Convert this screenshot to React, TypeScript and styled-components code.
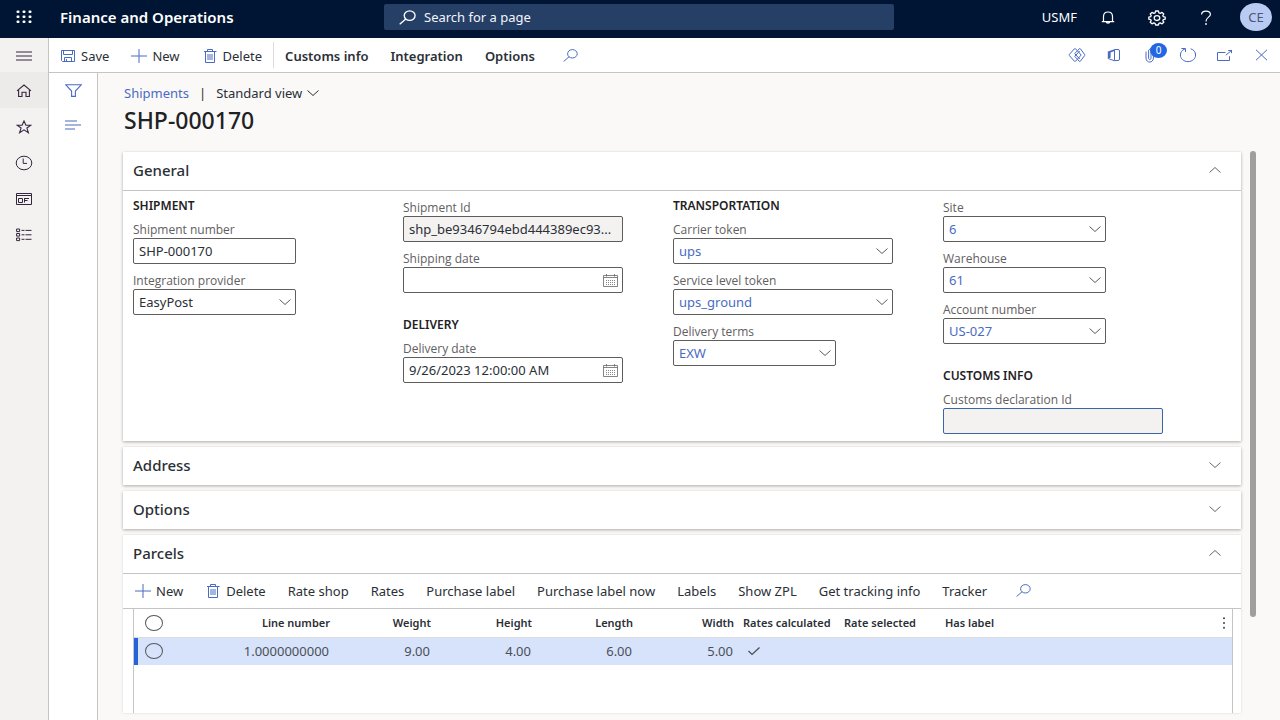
import React from "react";
import styled, { createGlobalStyle, css } from "styled-components";

const blue = "#4a6bc4";
const ink = "#2b2f36";
const line = "#c4c4c4";

const GlobalStyle = createGlobalStyle`
  * { box-sizing: border-box; }
  body {
    margin: 0;
    background: #faf9f8;
    color: ${ink};
    font-family: "Noto Sans", "Open Sans", sans-serif;
    font-size: 13px;
    line-height: 18px;
  }
  button, input, select { font: inherit; color: inherit; margin: 0; }
  svg { display: block; flex: none; }
`;

const Shell = styled.div`
  min-height: 100vh;
  display: flex;
  flex-direction: column;
`;

const PlainButton = styled.button`
  display: flex;
  align-items: center;
  justify-content: center;
  padding: 0;
  border: 0;
  background: none;
  cursor: pointer;
`;

/* ---------- top bar ---------- */

const TopBar = styled.header`
  display: grid;
  grid-template-columns: 30% 40% 30%;
  align-items: center;
  height: 38px;
  padding-bottom: 4px;
  background: #001433;
  color: #fff;
`;

const Brand = styled.div`
  display: flex;
  align-items: center;
  font-size: 15px;
  font-weight: 600;
`;

const Waffle = styled(PlainButton)`
  width: 48px;
  height: 34px;
  margin-right: 12px;
`;

const SearchBox = styled.label`
  display: flex;
  align-items: center;
  gap: 8px;
  height: 26px;
  margin-right: 2px;
  padding: 0 15px;
  border-radius: 2px;
  background: #263f66;
`;

const SearchInput = styled.input`
  flex: 1;
  min-width: 0;
  padding: 0;
  border: 0;
  outline: 0;
  background: none;
  color: #fff;
  &::placeholder { color: #f3f5f9; opacity: 1; }
`;

const TopTools = styled.div`
  display: flex;
  align-items: center;
  justify-content: flex-end;
  padding-right: 8px;
`;

const Company = styled(PlainButton)`
  color: #fff;
  margin-right: 6px;
`;

const TopTool = styled(PlainButton)`
  width: 49px;
  height: 34px;
  padding-top: 2px;
  color: #fff;
`;

const Avatar = styled(PlainButton)`
  width: 32px;
  height: 28px;
  margin-left: 10px;
  border-radius: 50%;
  background: #b9cbf3;
  color: #4a5878;
`;

/* ---------- frame ---------- */

const Frame = styled.div`
  flex: 1;
  display: flex;
`;

const Rail = styled.nav`
  width: 49px;
  flex: none;
  border-right: 1px solid ${line};
  background: #f3f2f1;
`;

const RailButton = styled(PlainButton)<{ $on?: boolean }>`
  width: 48px;
  height: 36px;
  padding-top: 2px;
  color: #33263f;
  background: ${(p) => (p.$on ? "#edebe9" : "none")};
  &:first-child { height: 34px; }
`;

const Workspace = styled.div`
  flex: 1;
  min-width: 0;
  display: flex;
  flex-direction: column;
`;

const ActionBar = styled.div`
  display: flex;
  justify-content: space-between;
  height: 35px;
  border-bottom: 1px solid ${line};
  background: #fff;
`;

const BarGroup = styled.div`
  display: flex;
  align-items: center;
`;

const BarButton = styled(PlainButton)<{ $tab?: boolean }>`
  gap: 5px;
  height: 34px;
  padding: 1px 11px 0;
  white-space: nowrap;
  font-weight: ${(p) => (p.$tab ? 600 : 400)};
  svg { color: ${blue}; }
`;

const BarSearch = styled(PlainButton)`
  width: 50px;
  height: 30px;
  color: ${blue};
`;

const Divider = styled.span`
  width: 1px;
  height: 26px;
  background: #dcdcdc;
`;

const BarIcons = styled(BarGroup)`
  color: ${blue};
`;

const BarIcon = styled(PlainButton)`
  position: relative;
  width: 37px;
  height: 34px;
  color: ${blue};
`;

const CountBadge = styled.span`
  position: absolute;
  top: 5px;
  left: 18px;
  width: 17px;
  height: 15px;
  border-radius: 50%;
  background: #2266e3;
  color: #fff;
  font-size: 10px;
  line-height: 15px;
  text-align: center;
`;

const Columns = styled.div`
  flex: 1;
  display: flex;
`;

const FilterRail = styled.aside`
  width: 49px;
  flex: none;
  border-right: 1px solid ${line};
  background: #fff;
`;

const FilterButton = styled(PlainButton)`
  width: 48px;
  height: 34px;
  padding-top: 1px;
  color: ${blue};
`;

const Main = styled.main`
  flex: 1;
  min-width: 0;
  display: flex;
  flex-direction: column;
  padding: 11px 24px 7px 25px;
`;

const Crumbs = styled.div`
  display: flex;
  align-items: center;
  padding-left: 1px;
`;

const CrumbLink = styled.a`
  color: ${blue};
  text-decoration: none;
`;

const Bar = styled.span`
  margin: 0 10px;
`;

const ViewButton = styled(PlainButton)`
  gap: 5px;
`;

const Title = styled.h1`
  margin: 5px 0 18px 1px;
  font-size: 23px;
  line-height: 26px;
  font-weight: 500;
  color: #1f2225;
`;

const Scroller = styled.div`
  flex: 1;
  display: flex;
  gap: 9px;
`;

const Cards = styled.div`
  flex: 1;
  min-width: 0;
  display: flex;
  flex-direction: column;
  gap: 6px;
  padding-top: 1px;
`;

const Thumb = styled.div`
  width: 6px;
  height: 83%;
  border-radius: 3px;
  background: #a09f9e;
`;

/* ---------- cards ---------- */

const Card = styled.section<{ $grow?: boolean }>`
  display: flex;
  flex-direction: column;
  background: #fff;
  box-shadow: ${(p) => (p.$grow ? "0 0 2px rgba(0,0,0,.16)" : "0 1px 3px rgba(0,0,0,.32)")};
  ${(p) => p.$grow && css`flex: 1;`}
`;

const CardHead = styled.button<{ $open?: boolean }>`
  display: flex;
  align-items: center;
  justify-content: space-between;
  width: 100%;
  height: ${(p) => (p.$open ? 39 : 38)}px;
  padding: 0 20px 2px 10px;
  border: 0;
  border-bottom: ${(p) => (p.$open ? `1px solid ${line}` : "0")};
  background: none;
  font-size: 15px;
  font-weight: 500;
  cursor: pointer;
  svg { color: #666; }
`;

const FieldGrid = styled.div`
  display: grid;
  grid-template-columns: repeat(4, 270px);
  padding: 6px 10px 7px;
`;

const FieldColumn = styled.div`
  display: flex;
  flex-direction: column;
  gap: 23px;
`;

const FieldGroup = styled.div<{ $bare?: boolean }>`
  display: flex;
  flex-direction: column;
  gap: 8px;
  padding-top: ${(p) => (p.$bare ? 2 : 0)}px;
`;

const GroupTitle = styled.h2`
  margin: 0 0 -2px;
  font-size: 12px;
  line-height: 18px;
  font-weight: 600;
  color: #1f2225;
`;

const FieldBox = styled.div<{ $wide?: boolean }>`
  width: ${(p) => (p.$wide ? 220 : 163)}px;
`;

const FieldLabel = styled.label`
  display: block;
  font-family: "Open Sans", "Noto Sans", sans-serif;
  font-size: 12px;
  line-height: 17px;
  color: #5f605f;
`;

const Control = styled.div`
  display: grid;
  align-items: center;
  > * { grid-area: 1 / 1; }
  > svg, > button { justify-self: end; margin-right: 5px; color: #5c5c5c; pointer-events: none; }
`;

const controlStyle = css`
  width: 100%;
  height: 26px;
  padding: 0 5px;
  border: 1px solid #5f5d5b;
  border-radius: 2px;
  background: #fff;
  outline: 0;
  text-overflow: ellipsis;
`;

const TextInput = styled.input<{ $active?: boolean }>`
  ${controlStyle}
  &:read-only { background: #f3f2f1; }
  ${(p) => p.$active && css`border-color: #3a66a8;`}
`;

const Select = styled.select<{ $link?: boolean }>`
  ${controlStyle}
  appearance: none;
  color: ${(p) => (p.$link ? blue : ink)};
`;

/* ---------- grid ---------- */

const GridBar = styled.div`
  display: flex;
  align-items: center;
  height: 35px;
  padding: 0 0 2px 1px;
  border-bottom: 1px solid ${line};
`;

const TableFrame = styled.div`
  flex: 1;
  margin: 0 8px 0 10px;
  border: 1px solid ${line};
  border-width: 0 1px;
`;

const Table = styled.table`
  width: 100%;
  table-layout: fixed;
  border-collapse: collapse;
`;

const Th = styled.th<{ $num?: boolean }>`
  height: 28px;
  padding: 0 4px 0 5px;
  border-bottom: 1px solid #dcdcdc;
  font-size: 11px;
  font-weight: 600;
  white-space: nowrap;
  text-align: ${(p) => (p.$num ? "right" : "left")};
`;

const Td = styled.td<{ $num?: boolean; $mark?: boolean }>`
  height: 28px;
  padding: 0 5px 0 5px;
  background: #d7e3fa;
  color: #4a4f58;
  text-align: ${(p) => (p.$num ? "right" : "left")};
  ${(p) => p.$mark && css`box-shadow: inset 4px 0 0 #2563d8;`}
`;

const RowPick = styled.input`
  appearance: none;
  display: block;
  width: 18px;
  height: 16px;
  margin: 0 0 0 6px;
  border: 1px solid #55585c;
  border-radius: 50%;
`;

const RowCheck = styled.input`
  appearance: none;
  grid-area: 1 / 1;
  width: 14px;
  height: 14px;
`;

const CheckMark = styled.label`
  display: grid;
  width: 14px;
  margin-left: 4px;
  svg { grid-area: 1 / 1; align-self: center; pointer-events: none; }
`;

/* ---------- icons ---------- */

const Icon = ({ w, h, sw = 1, children }: { w: number; h: number; sw?: number; children: React.ReactNode }) => (
  <svg width={w} height={h} viewBox={`0 0 ${w} ${h}`} fill="none" stroke="currentColor" strokeWidth={sw} aria-hidden="true">
    {children}
  </svg>
);

const WaffleIcon = () => (
  <Icon w={16} h={14}>
    {[0, 6, 12].map((x) => [0, 5, 10].map((y) => (
      <rect key={`${x}-${y}`} x={x + 0.5} y={y + 0.5} width="3" height="2.6" rx="1" fill="#fff" stroke="none" />
    )))}
  </Icon>
);

const SearchIcon = ({ w = 15, h = 13, sw = 1 }) => (
  <svg width={w} height={h} viewBox="0 0 15 13" fill="none" stroke="currentColor" strokeWidth={sw} aria-hidden="true">
    <ellipse cx="9.4" cy="4.8" rx="4.8" ry="4.2" />
    <path d="M6 7.8 L.6 12.5" />
  </svg>
);

const BellIcon = () => (
  <Icon w={14} h={14} sw={1.2}>
    <path d="M2.5 10.5 V5.6 C2.5 2.8 4.5 1 7 1 S11.5 2.8 11.5 5.6 V10.5 M.8 10.6 H13.2 M5.2 10.8 C5.4 12.6 8.6 12.6 8.8 10.8" />
  </Icon>
);

const GearIcon = () => (
  <Icon w={18} h={16} sw={1.3}>
    <path strokeLinejoin="round" d="M7.6 1 H10.4 L10.9 2.8 L12.2 3.3 L14 2.4 L15.8 4 L14.8 5.6 L15.3 6.7 L17.2 7.1 V9.2 L15.3 9.6 L14.8 10.7 L15.8 12.2 L14 13.8 L12.2 12.9 L10.9 13.4 L10.4 15 H7.6 L7.1 13.4 L5.8 12.9 L4 13.8 L2.2 12.2 L3.2 10.7 L2.7 9.6 L.8 9.2 V7.1 L2.7 6.7 L3.2 5.6 L2.2 4 L4 2.4 L5.8 3.3 L7.1 2.8 Z" />
    <ellipse cx="9" cy="8.1" rx="2.8" ry="2.4" />
  </Icon>
);

const HelpIcon = () => (
  <Icon w={12} h={16} sw={1.2}>
    <path d="M1.6 4.6 C1.6 2.2 3.4 1.1 6 1.1 S10.4 2.4 10.4 4.4 C10.4 7.2 6 7.2 6 11.4" />
    <circle cx="6" cy="14" r=".9" fill="currentColor" stroke="none" />
  </Icon>
);

const MenuIcon = () => <Icon w={16} h={10}><path d="M0 1 H16 M0 5 H16 M0 9 H16" /></Icon>;
const HomeIcon = () => <Icon w={16} h={14} sw={1.1}><path d="M1 6.8 L8 1 L15 6.8 M2.6 5.8 V12.5 H6 V8.2 H10 V12.5 H13.4 V5.8" /></Icon>;
const StarIcon = () => <Icon w={16} h={14} sw={1.1}><path d="M8 1 L9.9 5.2 H14.9 L10.9 8 L12.4 12.7 L8 9.9 L3.6 12.7 L5.1 8 L1.1 5.2 H6.1 Z" /></Icon>;
const ClockIcon = () => <Icon w={18} h={16}><ellipse cx="9" cy="8" rx="7.8" ry="6.8" /><path d="M8.2 3.5 V8.4 H12" /></Icon>;
const WorkspaceIcon = () => (
  <Icon w={16} h={12}>
    <path d="M.5 .5 H15.5 V11.5 H.5 Z M.5 2.5 H15.5 M2.5 5.5 H6.5 V9.5 H2.5 Z M8.5 5.5 H13 M8.5 7.5 H11.5 M8.5 5 V9.5" />
  </Icon>
);
const ListIcon = () => (
  <Icon w={16} h={14}>
    <path d="M.6 1 H3.6 V3.6 H.6 Z M.6 5.5 H3.6 V8.1 H.6 Z M.6 10 H3.6 V12.6 H.6 Z M5.5 2.4 H8.5 M9.5 2.4 H15.5 M5.5 6.8 H8.5 M9.5 6.8 H15.5 M5.5 11.3 H8.5 M9.5 11.3 H15.5" />
  </Icon>
);
const FilterIcon = () => <Icon w={17} h={14} sw={1.1}><path d="M.8 .8 H16.2 L10.4 7 V12.4 H6.6 V7 Z" /></Icon>;
const LinesIcon = () => <Icon w={16} h={10} sw={1.1}><path d="M0 1 H12 M0 5 H16 M0 9 H10" /></Icon>;
const SaveIcon = () => (
  <Icon w={16} h={14}>
    <path d="M1.5 1.5 H14.5 V12.5 H2.5 L1.5 11.5 Z M3.5 1.5 V5.5 H12.5 V1.5 M4.5 12.5 V8.5 H11.5 V12.5 M6.5 10 V12.5" />
  </Icon>
);
const PlusIcon = () => <Icon w={16} h={14}><path d="M8 0 V14 M0 7 H16" /></Icon>;
const TrashIcon = () => (
  <Icon w={16} h={14}>
    <path d="M2 2.5 H14.5 M5.5 2.4 V.5 H10.5 V2.4 M3.5 2.5 V13.5 H12.5 V2.5 M6 5 V11 M8 5 V11 M10 5 V11" />
  </Icon>
);
const PowerAppsIcon = () => (
  <Icon w={18} h={16}>
    <path d="M6.4 1.8 Q7 1.2 7.6 1.8 L9.4 3.8 L11.2 1.8 Q11.8 1.2 12.4 1.8 L16.6 7.4 Q17 8 16.6 8.6 L12.4 14.2 Q11.8 14.8 11.2 14.2 L9.4 12.2 L7.6 14.2 Q7 14.8 6.4 14.2 L1.4 8.6 Q1 8 1.4 7.4 Z" />
    <path d="M9.4 3.8 L7 6.2 Q6.6 6.6 7 7 L11.8 12 M9.4 12.2 L7 9.8 Q6.6 9.4 7 9 L11.8 4 M9.4 3.8 L13.2 8 L9.4 12.2" />
  </Icon>
);
const OfficeIcon = () => (
  <Icon w={14} h={14}>
    <path d="M7.5 1.5 H11 Q12.5 1.5 12.5 3 V11 Q12.5 12.5 11 12.5 H7.5 Z" />
    <path d="M.8 3.6 L7.5 1.2 V3 L3.6 4.4 V9.8 L.8 10.6 Z" fill="currentColor" stroke="none" />
    <path d="M.9 10.4 L7.5 12.8" />
  </Icon>
);
const ClipIcon = () => (
  <Icon w={12} h={15}>
    <path d="M1 3.6 V10 C1 15.4 8.4 15.4 8.4 10 V3 C8.4 .2 3.6 .2 3.6 3 V10 C3.6 12.2 6 12.2 6 10 V4" />
  </Icon>
);
const RefreshIcon = () => (
  <Icon w={18} h={16}>
    <path d="M11.6 1.8 C15 2.8 16.6 5.2 16.6 8 C16.6 11.8 13.4 14.6 9 14.6 S1.4 11.8 1.4 8 C1.4 5.2 3 3 6 1.9 M2.4 1.5 H6.5 V5" />
  </Icon>
);
const PopOutIcon = () => <Icon w={17} h={13}><path d="M9.5 3.5 H1.5 V11.5 H13.5 V7.2 M9.8 6.2 L16 1 M12.2 1.5 H15.5 V4.2" /></Icon>;
const CloseIcon = () => <Icon w={13} h={12}><path d="M1 .8 L12 11.2 M12 .8 L1 11.2" /></Icon>;
const ChevronDown = () => <Icon w={12} h={8}><path d="M.5 1.5 L6 6.5 L11.5 1.5" /></Icon>;
const ChevronUp = () => <Icon w={12} h={8}><path d="M.5 6.5 L6 1.5 L11.5 6.5" /></Icon>;
const CalendarIcon = () => (
  <Icon w={15} h={13}>
    <g strokeOpacity=".75">
      <path d="M.5 1.5 H14.5 V12.5 H.5 Z M.5 3.5 H14.5 M3.5 0 V2.5 M11.5 0 V2.5" />
      <path d="M3 6.5 H12.5 M3 8.5 H12.5 M3 10.5 H12.5" strokeDasharray="1 1" />
    </g>
  </Icon>
);
const CheckIcon = () => <Icon w={14} h={10} sw={1.3}><path d="M1.5 5 L5 8.4 L12.5 1.4" /></Icon>;
const MoreIcon = () => (
  <Icon w={4} h={12}>
    {[1.2, 6, 10.8].map((y) => <circle key={y} cx="2" cy={y} r="1" fill="#444" stroke="none" />)}
  </Icon>
);

/* ---------- fields ---------- */

type FieldProps = {
  id: string;
  label: string;
  value?: string;
  kind?: "text" | "select" | "date";
  wide?: boolean;
  link?: boolean;
  locked?: boolean;
  active?: boolean;
};

const Field = ({ id, label, value = "", kind = "text", wide, link, locked, active }: FieldProps) => (
  <FieldBox $wide={wide}>
    <FieldLabel htmlFor={id}>{label}</FieldLabel>
    <Control>
      {kind === "select" ? (
        <Select id={id} $link={link} defaultValue={value}>
          <option>{value}</option>
        </Select>
      ) : (
        <TextInput id={id} type="text" defaultValue={value} readOnly={locked} $active={active} />
      )}
      {kind === "select" && <ChevronDown />}
      {kind === "date" && (
        <PlainButton type="button" aria-label={`Choose ${label.toLowerCase()}`}>
          <CalendarIcon />
        </PlainButton>
      )}
    </Control>
  </FieldBox>
);

const gridActions = ["Rate shop", "Rates", "Purchase label", "Purchase label now", "Labels", "Show ZPL", "Get tracking info", "Tracker"];

export default function App() {
  return (
    <Shell>
      <GlobalStyle />
      <TopBar>
        <Brand>
          <Waffle aria-label="App launcher"><WaffleIcon /></Waffle>
          Finance and Operations
        </Brand>
        <SearchBox>
          <SearchIcon w={17} h={15} sw={1.2} />
          <SearchInput type="text" placeholder="Search for a page" aria-label="Search for a page" />
        </SearchBox>
        <TopTools>
          <Company>USMF</Company>
          <TopTool aria-label="Notifications"><BellIcon /></TopTool>
          <TopTool aria-label="Settings"><GearIcon /></TopTool>
          <TopTool aria-label="Help"><HelpIcon /></TopTool>
          <Avatar aria-label="Account">CE</Avatar>
        </TopTools>
      </TopBar>

      <Frame>
        <Rail aria-label="Navigation">
          <RailButton aria-label="Expand"><MenuIcon /></RailButton>
          <RailButton $on aria-label="Home"><HomeIcon /></RailButton>
          <RailButton aria-label="Favorites"><StarIcon /></RailButton>
          <RailButton aria-label="Recent"><ClockIcon /></RailButton>
          <RailButton aria-label="Workspaces"><WorkspaceIcon /></RailButton>
          <RailButton aria-label="Modules"><ListIcon /></RailButton>
        </Rail>

        <Workspace>
          <ActionBar>
            <BarGroup>
              <BarButton><SaveIcon />Save</BarButton>
              <BarButton><PlusIcon />New</BarButton>
              <BarButton><TrashIcon />Delete</BarButton>
              <Divider />
              <BarButton $tab>Customs info</BarButton>
              <BarButton $tab>Integration</BarButton>
              <BarButton $tab>Options</BarButton>
              <BarSearch aria-label="Search actions"><SearchIcon /></BarSearch>
            </BarGroup>
            <BarIcons>
              <BarIcon aria-label="Power Apps"><PowerAppsIcon /></BarIcon>
              <BarIcon aria-label="Open in Office"><OfficeIcon /></BarIcon>
              <BarIcon aria-label="Attachments"><ClipIcon /><CountBadge>0</CountBadge></BarIcon>
              <BarIcon aria-label="Refresh"><RefreshIcon /></BarIcon>
              <BarIcon aria-label="Open in new window"><PopOutIcon /></BarIcon>
              <BarIcon aria-label="Close"><CloseIcon /></BarIcon>
            </BarIcons>
          </ActionBar>

          <Columns>
            <FilterRail>
              <FilterButton aria-label="Filter"><FilterIcon /></FilterButton>
              <FilterButton aria-label="Show list"><LinesIcon /></FilterButton>
            </FilterRail>

            <Main>
              <Crumbs>
                <CrumbLink href="#shipments">Shipments</CrumbLink>
                <Bar>|</Bar>
                <ViewButton>Standard view<ChevronDown /></ViewButton>
              </Crumbs>
              <Title>SHP-000170</Title>

              <Scroller>
                <Cards>
                  <Card>
                    <CardHead $open>General<ChevronUp /></CardHead>
                    <FieldGrid>
                      <FieldColumn>
                        <FieldGroup>
                          <GroupTitle>SHIPMENT</GroupTitle>
                          <Field id="number" label="Shipment number" value="SHP-000170" />
                          <Field id="provider" label="Integration provider" value="EasyPost" kind="select" />
                        </FieldGroup>
                      </FieldColumn>
                      <FieldColumn>
                        <FieldGroup $bare>
                          <Field id="shipment-id" label="Shipment Id" value="shp_be9346794ebd444389ec93..." wide locked />
                          <Field id="ship-date" label="Shipping date" kind="date" wide />
                        </FieldGroup>
                        <FieldGroup>
                          <GroupTitle>DELIVERY</GroupTitle>
                          <Field id="delivery-date" label="Delivery date" value="9/26/2023 12:00:00 AM" kind="date" wide />
                        </FieldGroup>
                      </FieldColumn>
                      <FieldColumn>
                        <FieldGroup>
                          <GroupTitle>TRANSPORTATION</GroupTitle>
                          <Field id="carrier" label="Carrier token" value="ups" kind="select" wide link />
                          <Field id="service" label="Service level token" value="ups_ground" kind="select" wide link />
                          <Field id="terms" label="Delivery terms" value="EXW" kind="select" link />
                        </FieldGroup>
                      </FieldColumn>
                      <FieldColumn>
                        <FieldGroup $bare>
                          <Field id="site" label="Site" value="6" kind="select" link />
                          <Field id="warehouse" label="Warehouse" value="61" kind="select" link />
                          <Field id="account" label="Account number" value="US-027" kind="select" link />
                        </FieldGroup>
                        <FieldGroup>
                          <GroupTitle>CUSTOMS INFO</GroupTitle>
                          <Field id="customs" label="Customs declaration Id" wide locked active />
                        </FieldGroup>
                      </FieldColumn>
                    </FieldGrid>
                  </Card>

                  <Card><CardHead>Address<ChevronDown /></CardHead></Card>
                  <Card><CardHead>Options<ChevronDown /></CardHead></Card>

                  <Card $grow>
                    <CardHead $open>Parcels<ChevronUp /></CardHead>
                    <GridBar>
                      <BarButton><PlusIcon />New</BarButton>
                      <BarButton><TrashIcon />Delete</BarButton>
                      {gridActions.map((name) => <BarButton key={name}>{name}</BarButton>)}
                      <BarSearch aria-label="Search parcel actions"><SearchIcon /></BarSearch>
                    </GridBar>
                    <TableFrame>
                      <Table>
                        <colgroup>
                          <col style={{ width: 40 }} />
                          <col style={{ width: 160 }} />
                          {[0, 1, 2, 3, 4, 5].map((i) => <col key={i} style={{ width: 101 }} />)}
                          <col />
                          <col style={{ width: 15 }} />
                        </colgroup>
                        <thead>
                          <tr>
                            <Th><RowPick type="checkbox" aria-label="Select all" /></Th>
                            <Th $num>Line number</Th>
                            <Th $num>Weight</Th>
                            <Th $num>Height</Th>
                            <Th $num>Length</Th>
                            <Th $num>Width</Th>
                            <Th>Rates calculated</Th>
                            <Th>Rate selected</Th>
                            <Th>Has label</Th>
                            <Th><PlainButton aria-label="Grid options"><MoreIcon /></PlainButton></Th>
                          </tr>
                        </thead>
                        <tbody>
                          <tr>
                            <Td $mark><RowPick type="checkbox" aria-label="Select row" /></Td>
                            <Td $num>1.0000000000</Td>
                            <Td $num>9.00</Td>
                            <Td $num>4.00</Td>
                            <Td $num>6.00</Td>
                            <Td $num>5.00</Td>
                            <Td>
                              <CheckMark>
                                <RowCheck type="checkbox" defaultChecked aria-label="Rates calculated" />
                                <CheckIcon />
                              </CheckMark>
                            </Td>
                            <Td />
                            <Td />
                            <Td />
                          </tr>
                        </tbody>
                      </Table>
                    </TableFrame>
                  </Card>
                </Cards>
                <Thumb />
              </Scroller>
            </Main>
          </Columns>
        </Workspace>
      </Frame>
    </Shell>
  );
}
